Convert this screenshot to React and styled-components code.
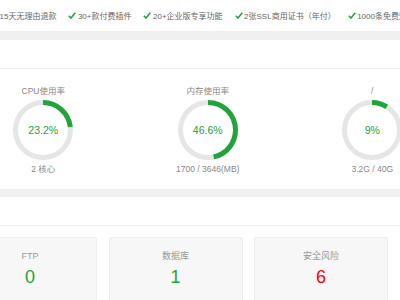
import React from "react";
import styled, { createGlobalStyle } from "styled-components";

const Global = createGlobalStyle`
  html, body { margin: 0; padding: 0; }
  body {
    background: #f0f0f0;
    overflow: hidden;
    width: 400px;
    height: 300px;
    font-family: "Liberation Sans", "Noto Sans CJK SC", sans-serif;
  }
`;

const Page = styled.div`
  width: 400px;
  height: 300px;
  overflow: hidden;
  display: flex;
  flex-direction: column;
`;

const TopBar = styled.div`
  height: 31px;
  background: #fff;
  display: flex;
  align-items: center;
  gap: 12px;
  margin-left: -10px;
  white-space: nowrap;
  flex-shrink: 0;
  overflow: hidden;
`;

const Perk = styled.span`
  display: flex;
  align-items: center;
  gap: 1.5px;
  font-size: 8px;
  color: #666;
`;

const Check = () => (
  <svg width="8" height="7" viewBox="0 0 8 7">
    <path d="M0.8 3.8 L3 6 L7.3 0.8" fill="none" stroke="#20a53a" strokeWidth="1.6" />
  </svg>
);

const Panel = styled.div`
  background: #fff;
  margin-top: ${(p) => p.$gap}px;
  flex-shrink: 0;
`;

const PanelHead = styled.div`
  height: 28px;
  border-bottom: 1px solid #eee;
`;

const GaugeRow = styled.div`
  display: flex;
  margin-left: -39px;
  height: 120px;
  padding-top: 16px;
  box-sizing: border-box;
`;

const GaugeCol = styled.div`
  width: 164.5px;
  flex-shrink: 0;
  display: flex;
  flex-direction: column;
  align-items: center;
`;

const GaugeLabel = styled.div`
  font-size: 8.5px;
  color: #888;
  line-height: 12px;
  height: 12px;
`;

const Ring = styled.div`
  position: relative;
  width: 60px;
  height: 60px;
  margin-top: 3px;
`;

const RingValue = styled.div`
  position: absolute;
  inset: 0;
  display: flex;
  align-items: center;
  justify-content: center;
  font-size: 10.5px;
  color: #20a53a;
`;

const GaugeSub = styled.div`
  font-size: 8.5px;
  color: #888;
  margin-top: 3px;
  line-height: 12px;
`;

const CardRow = styled.div`
  display: flex;
  gap: 11.5px;
  margin-left: -37px;
  padding-top: 11px;
  height: 80px;
`;

const Card = styled.div`
  width: 134px;
  flex-shrink: 0;
  background: #f7f7f7;
  border: 1px solid #eee;
  border-radius: 2px;
  box-sizing: border-box;
  display: flex;
  flex-direction: column;
  align-items: center;
  padding-top: 12px;
`;

const CardLabel = styled.div`
  font-size: 9px;
  color: #999;
  line-height: 12px;
`;

const CardValue = styled.div`
  font-size: 18px;
  line-height: 22px;
  margin-top: 4px;
  color: ${(p) => (p.$danger ? "#f00" : "#20a53a")};
`;

function Gauge({ label, value, pct, sub }) {
  const r = 27.5;
  const c = 2 * Math.PI * r;
  return (
    <GaugeCol>
      <GaugeLabel>{label}</GaugeLabel>
      <Ring>
        <svg width="60" height="60" viewBox="0 0 60 60">
          <circle cx="30" cy="30" r={r} fill="none" stroke="#e6e6e6" strokeWidth="5" />
          <circle
            cx="30"
            cy="30"
            r={r}
            fill="none"
            stroke="#20a53a"
            strokeWidth="5"
            strokeDasharray={`${(c * pct) / 100} ${c}`}
            transform="rotate(-90 30 30)"
          />
        </svg>
        <RingValue>{value}</RingValue>
      </Ring>
      <GaugeSub>{sub}</GaugeSub>
    </GaugeCol>
  );
}

const perks = ["15天无理由退款", "30+款付费插件", "20+企业版专享功能", "2张SSL商用证书（年付）", "1000条免费短信"];

export default function App() {
  return (
    <Page>
      <Global />
      <TopBar>
        {perks.map((p) => (
          <Perk key={p}>
            <Check />
            {p}
          </Perk>
        ))}
      </TopBar>
      <Panel $gap={9}>
        <PanelHead />
        <GaugeRow>
          <Gauge label="CPU使用率" value="23.2%" pct={23.2} sub="2 核心" />
          <Gauge label="内存使用率" value="46.6%" pct={46.6} sub="1700 / 3646(MB)" />
          <Gauge label="/" value="9%" pct={9} sub="3.2G / 40G" />
        </GaugeRow>
      </Panel>
      <Panel $gap={8}>
        <PanelHead />
        <CardRow>
          <Card>
            <CardLabel>FTP</CardLabel>
            <CardValue>0</CardValue>
          </Card>
          <Card>
            <CardLabel>数据库</CardLabel>
            <CardValue>1</CardValue>
          </Card>
          <Card>
            <CardLabel>安全风险</CardLabel>
            <CardValue $danger>6</CardValue>
          </Card>
        </CardRow>
      </Panel>
    </Page>
  );
}
